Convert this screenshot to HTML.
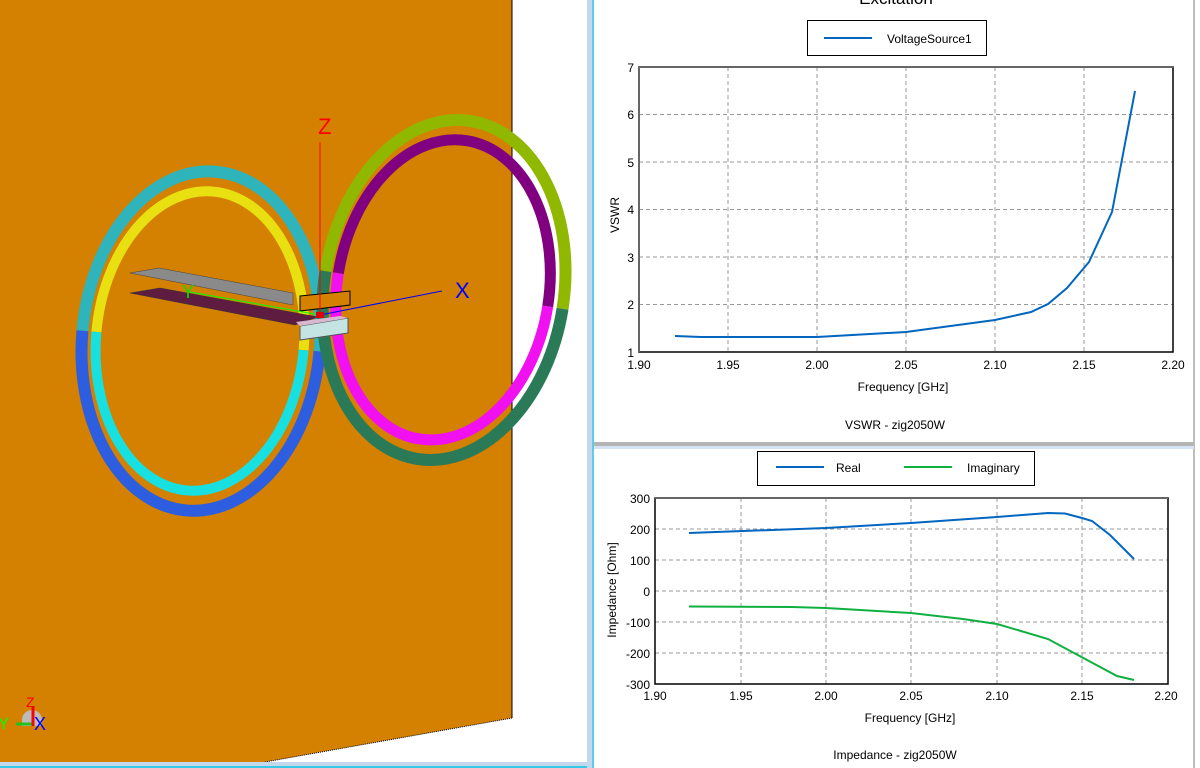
<!DOCTYPE html>
<html><head><meta charset="utf-8"><style>
html,body{margin:0;padding:0;width:1200px;height:768px;overflow:hidden;background:#fff}
svg{display:block;font-family:"Liberation Sans",sans-serif}
</style></head><body>
<svg width="1200" height="768" viewBox="0 0 1200 768">
<rect width="1200" height="768" fill="#fff"/>
<polygon points="0,0 512,0 512,718 265,762 0,762" fill="#d48000"/>
<line x1="512" y1="0" x2="512" y2="718" stroke="#000" stroke-width="1"/>
<line x1="512" y1="718" x2="265" y2="762" stroke="#000" stroke-width="1" stroke-dasharray="1,1"/>
<rect x="0" y="762" width="594" height="6" fill="#c4d8ec"/>
<rect x="0" y="766" width="594" height="2" fill="#38c8e8"/>
<rect x="587" y="0" width="7" height="768" fill="#c4d8ec"/>
<line x1="593" y1="0" x2="593" y2="768" stroke="#38c8e8" stroke-width="1.5"/>

<g transform="rotate(5 200 341)" fill="none">
 <path d="M82,341 A119,170 0 0 1 320,341" stroke="#30b4bc" stroke-width="12"/>
 <path d="M82,341 A119,170 0 0 0 320,341" stroke="#2e5ee0" stroke-width="12"/>
 <path d="M96,341 A104,150 0 0 1 304,341" stroke="#e8e010" stroke-width="10"/>
 <path d="M96,341 A104,150 0 0 0 304,341" stroke="#18e0e0" stroke-width="10"/>
</g>
<g transform="rotate(9 444 290)" fill="none">
 <path d="M324,290 A120,171 0 0 1 564,290" stroke="#90b800" stroke-width="12"/>
 <path d="M324,290 A120,171 0 0 0 564,290" stroke="#2a7a58" stroke-width="12"/>
 <path d="M337,290 A106,151 0 0 1 549,290" stroke="#800080" stroke-width="11"/>
 <path d="M337,290 A106,151 0 0 0 549,290" stroke="#f010f0" stroke-width="11"/>
</g>
<polygon points="130,273 159,268 293,293 293,305" fill="#8a8a8a" stroke="#444" stroke-width="0.5"/>
<polygon points="130,293 160,288 318,317 295,325" fill="#5e1c40" stroke="#333" stroke-width="0.5"/>
<polygon points="300,296 350,291 350,305 300,311" fill="#d48000" stroke="#000" stroke-width="1"/>
<polygon points="300,326 348,318 348,333 300,340" fill="#c4e4e4" stroke="#555" stroke-width="1"/>
<polygon points="296,322 340,316 348,318 300,326" fill="#d8b8d0"/>
<line x1="320" y1="142" x2="320" y2="318" stroke="#ff0000" stroke-width="1"/>
<text x="318" y="134" fill="#ff0000" font-size="22">Z</text>
<line x1="320" y1="315" x2="442" y2="291" stroke="#0000ff" stroke-width="1"/>
<text x="455" y="298" fill="#0000ff" font-size="22">X</text>
<line x1="190" y1="292" x2="320" y2="315" stroke="#00ff00" stroke-width="1"/>
<text x="182" y="298" fill="#00e000" font-size="18">Y</text>
<rect x="316" y="312" width="8" height="6" fill="#e00000"/>
<path d="M22,720 A10,10 0 0 1 42,720 L42,726 L22,726 Z" fill="#bbb"/>
<text x="-2" y="729" fill="#00ff00" font-size="17">Y</text>
<line x1="16" y1="724" x2="32" y2="724" stroke="#20c020" stroke-width="3"/>
<line x1="33" y1="726" x2="33" y2="706" stroke="#ff0000" stroke-width="3"/>
<text x="26" y="707" fill="#ff0000" font-size="14">Z</text>
<text x="34" y="730" fill="#0000ff" font-size="18">X</text>

<line x1="1194" y1="0" x2="1194" y2="768" stroke="#a8a8a8" stroke-width="1.5"/>
<rect x="594" y="442" width="600" height="4" fill="#b4b4b4"/>
<rect x="594" y="446" width="600" height="3" fill="#d4e4f4"/>

<text x="896" y="4" font-size="17" text-anchor="middle" fill="#000">Excitation</text>
<rect x="807.5" y="20.5" width="179" height="35" fill="#fff" stroke="#000" stroke-width="1"/>
<line x1="824" y1="38" x2="872" y2="38" stroke="#0066c0" stroke-width="2"/>
<text x="887" y="43" font-size="12">VoltageSource1</text>
<g stroke="#999" stroke-dasharray="4,3" stroke-width="1">
 <line x1="728" y1="67" x2="728" y2="352"/><line x1="817" y1="67" x2="817" y2="352"/>
 <line x1="906" y1="67" x2="906" y2="352"/><line x1="995" y1="67" x2="995" y2="352"/>
 <line x1="1084" y1="67" x2="1084" y2="352"/>
 <line x1="639" y1="114.5" x2="1173" y2="114.5"/><line x1="639" y1="162" x2="1173" y2="162"/>
 <line x1="639" y1="209.5" x2="1173" y2="209.5"/><line x1="639" y1="257" x2="1173" y2="257"/>
 <line x1="639" y1="304.5" x2="1173" y2="304.5"/>
</g>
<rect x="639" y="67" width="534" height="285" fill="none" stroke="#000" stroke-width="1.5"/>
<line x1="639" y1="67" x2="1173" y2="67" stroke="#666" stroke-width="2"/>
<line x1="639" y1="67" x2="639" y2="352" stroke="#666" stroke-width="2"/>
<polyline points="675,336 701,337 817,337 906,332 995,320 1031,312 1048,304 1067,288 1089,262 1112,212 1135,91" fill="none" stroke="#0066c0" stroke-width="2"/>
<g font-size="12" text-anchor="end">
 <text x="634" y="72">7</text><text x="634" y="119">6</text><text x="634" y="167">5</text>
 <text x="634" y="214">4</text><text x="634" y="262">3</text><text x="634" y="309">2</text><text x="634" y="357">1</text>
</g>
<g font-size="12" text-anchor="middle">
 <text x="639" y="369">1.90</text><text x="728" y="369">1.95</text><text x="817" y="369">2.00</text>
 <text x="906" y="369">2.05</text><text x="995" y="369">2.10</text><text x="1084" y="369">2.15</text><text x="1173" y="369">2.20</text>
 <text x="903" y="391">Frequency [GHz]</text>
 <text x="895" y="429">VSWR - zig2050W</text>
</g>
<text transform="translate(619 215) rotate(-90)" font-size="12" text-anchor="middle">VSWR</text>

<rect x="757.5" y="451.5" width="277" height="34" fill="#fff" stroke="#000" stroke-width="1"/>
<line x1="776" y1="467" x2="824" y2="467" stroke="#0066c0" stroke-width="2"/>
<text x="836" y="472" font-size="12">Real</text>
<line x1="904" y1="467" x2="952" y2="467" stroke="#10b040" stroke-width="2"/>
<text x="967" y="472" font-size="12">Imaginary</text>
<g stroke="#999" stroke-dasharray="4,3" stroke-width="1">
 <line x1="741" y1="498" x2="741" y2="684"/><line x1="826" y1="498" x2="826" y2="684"/>
 <line x1="911" y1="498" x2="911" y2="684"/><line x1="997" y1="498" x2="997" y2="684"/>
 <line x1="1082" y1="498" x2="1082" y2="684"/>
 <line x1="655" y1="529" x2="1168" y2="529"/><line x1="655" y1="560" x2="1168" y2="560"/>
 <line x1="655" y1="591" x2="1168" y2="591"/><line x1="655" y1="622" x2="1168" y2="622"/>
 <line x1="655" y1="653" x2="1168" y2="653"/>
</g>
<rect x="655" y="498" width="513" height="186" fill="none" stroke="#000" stroke-width="1.5"/>
<line x1="655" y1="498" x2="1168" y2="498" stroke="#666" stroke-width="2"/>
<polyline points="689,533 826,528 911,523 997,517 1048,513 1065,513.5 1082,518 1092,521 1110,535 1134,559" fill="none" stroke="#0066c0" stroke-width="2"/>
<polyline points="689,606.5 792,607 826,608 911,613 963,619 997,624 1048,639 1074,653 1117,676 1134,680" fill="none" stroke="#10b040" stroke-width="2"/>
<g font-size="12" text-anchor="end">
 <text x="650" y="503">300</text><text x="650" y="534">200</text><text x="650" y="565">100</text>
 <text x="650" y="596">0</text><text x="650" y="627">-100</text><text x="650" y="658">-200</text><text x="650" y="689">-300</text>
</g>
<g font-size="12" text-anchor="middle">
 <text x="655" y="700">1.90</text><text x="741" y="700">1.95</text><text x="826" y="700">2.00</text>
 <text x="911" y="700">2.05</text><text x="997" y="700">2.10</text><text x="1082" y="700">2.15</text><text x="1166" y="700">2.20</text>
 <text x="910" y="722">Frequency [GHz]</text>
 <text x="895" y="759">Impedance - zig2050W</text>
</g>
<text transform="translate(616 590) rotate(-90)" font-size="12" text-anchor="middle">Impedance [Ohm]</text>
</svg>
</body></html>
